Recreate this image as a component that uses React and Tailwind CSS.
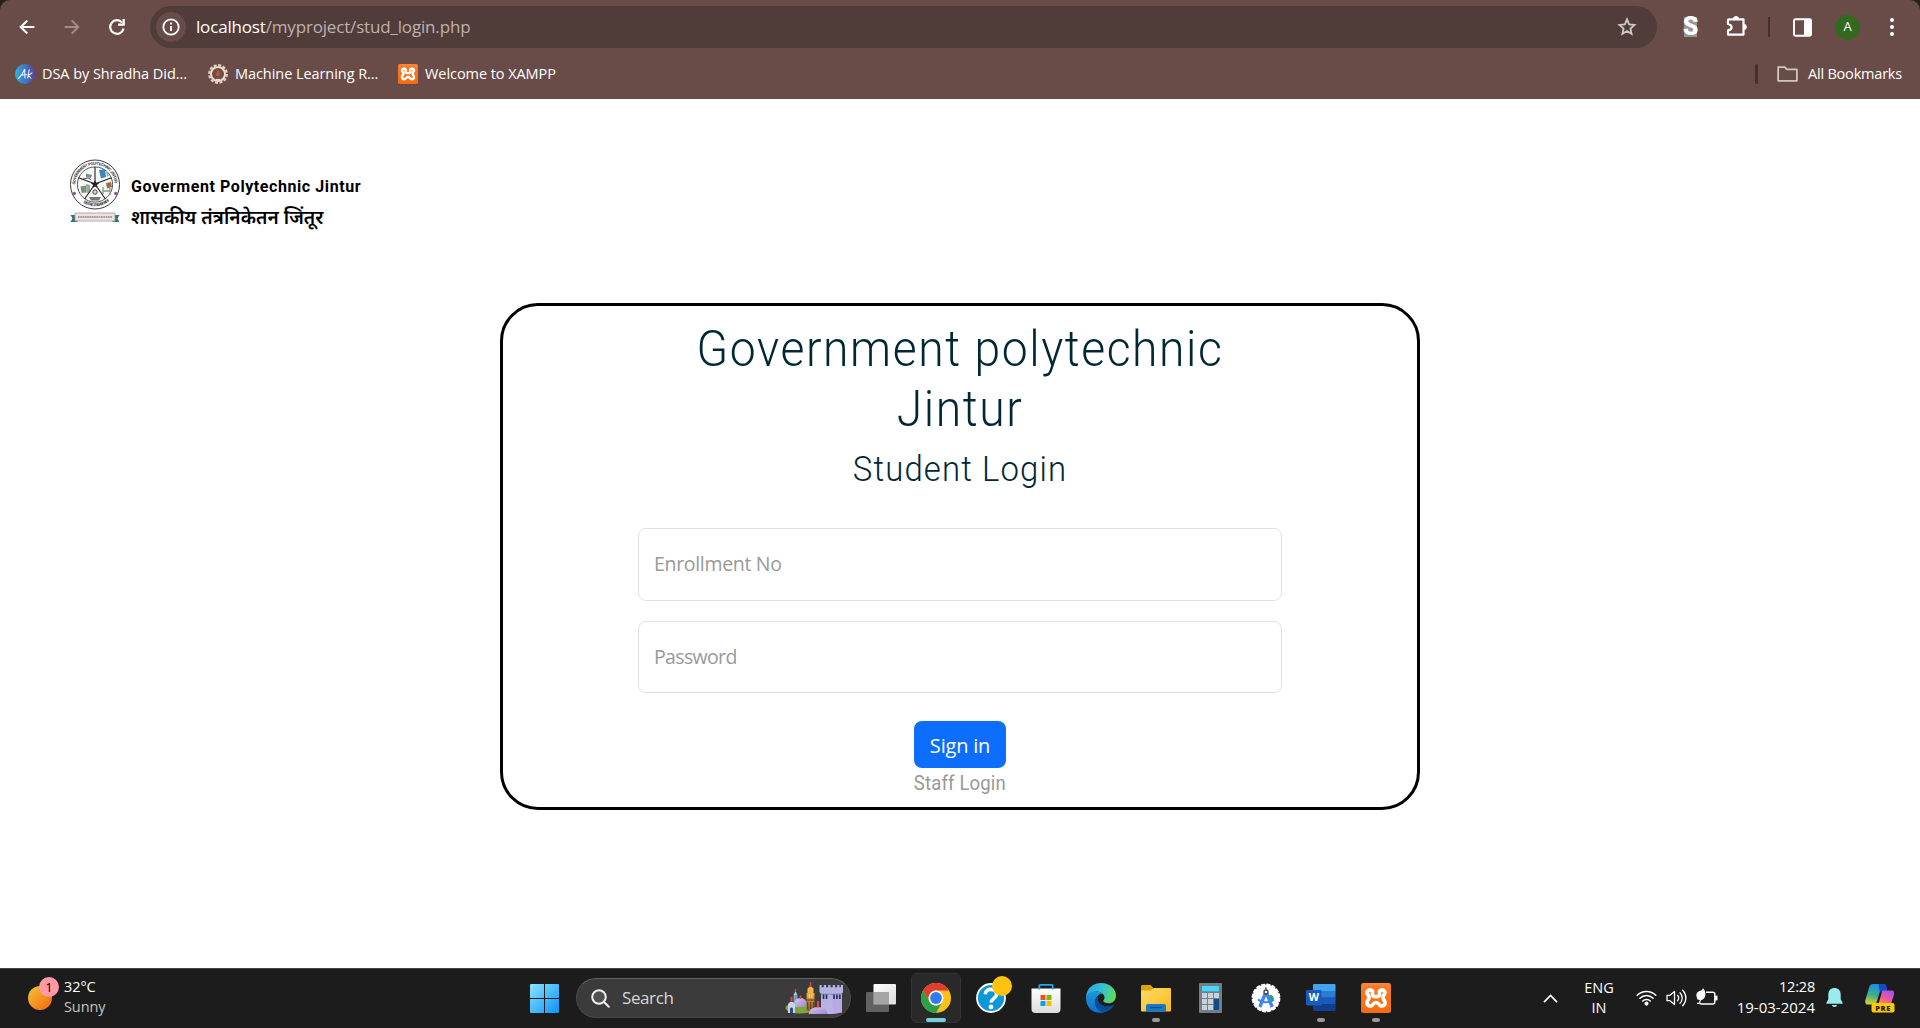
import React from "react";

/* ---------- Browser chrome icons ---------- */

const BackIcon = () => (
  <svg className="h-4 w-4" viewBox="0 0 16 16" fill="none" stroke="#fff" strokeWidth="2.1">
    <path d="M15.4 8H2.2M8.3 1.4 1.7 8l6.6 6.6" />
  </svg>
);

const ForwardIcon = () => (
  <svg className="h-4 w-4" viewBox="0 0 16 16" fill="none" stroke="#a08c89" strokeWidth="2">
    <path d="M.6 8h13.2M7.7 1.4 14.3 8l-6.6 6.6" />
  </svg>
);

const ReloadIcon = () => (
  <svg className="h-4 w-4" viewBox="0 0 16 16" fill="none" stroke="#fff" strokeWidth="2.2">
    <path d="M14.6 9.6A6.8 6.8 0 1 1 13.2 3.6" />
    <path d="M14.7 0v5.7H9" />
  </svg>
);

const InfoIcon = () => (
  <svg className="h-[18px] w-[18px]" viewBox="0 0 18 18" fill="none" stroke="#fff">
    <circle cx="9" cy="9" r="7.7" strokeWidth="1.8" />
    <path d="M9 7.9v5.2M9 4.6v1.9" strokeWidth="1.9" />
  </svg>
);

const StarIcon = () => (
  <svg className="h-5 w-5" viewBox="0 0 20 20" fill="none" stroke="#cfc8c7" strokeWidth="1.8">
    <path d="m10 2.4 2.1 5 5.4.5-4.1 3.6 1.2 5.3L10 14l-4.6 2.8 1.2-5.3-4.1-3.6 5.4-.5z" />
  </svg>
);

const PuzzleIcon = () => (
  <svg className="h-[22px] w-[22px]" viewBox="0 0 22 22">
    <path
      d="M2.8 4.3h14.7v15.3H2v-4.2c2.6-.5 3.6-1.6 3.6-3.2S4.600 9.600 2 9V5.100a.8.8 0 0 1 .8-.8z"
      fill="none"
      stroke="#fff"
      strokeWidth="2.2"
      strokeLinejoin="round"
    />
    <path d="M7.200 4.200a2.800 2.800 0 0 1 5.600 0zM17.600 9.200a2.800 2.800 0 0 1 0 5.600z" fill="#fff" stroke="#fff" strokeWidth=".8" />
  </svg>
);

const SidePanelIcon = () => (
  <svg className="h-[19px] w-[19px]" viewBox="0 0 19 19">
    <rect x="1" y="1.2" width="17" height="16.6" rx="1.2" fill="none" stroke="#fff" strokeWidth="1.9" />
    <path d="M11 1h7v17h-7z" fill="#fff" />
  </svg>
);

const FolderOutline = () => (
  <svg className="h-4 w-[21px]" viewBox="0 0 21 16" fill="none" stroke="#cfc6c4" strokeWidth="1.8">
    <path d="M1.2 1.2h6.600l2 2.200h9.800a.3.3 0 0 1 .3.3v10.800a.4.4 0 0 1-.4.4h-18a.4.4 0 0 1-.4-.4z" />
  </svg>
);

const AkIcon = () => (
  <svg className="h-5 w-5" viewBox="0 0 20 20">
    <defs>
      <linearGradient id="ak" x1="0" x2="1">
        <stop offset="0" stopColor="#2fb4d4" />
        <stop offset=".5" stopColor="#3e78c4" />
        <stop offset="1" stopColor="#5f3f9f" />
      </linearGradient>
    </defs>
    <circle cx="10" cy="10" r="10" fill="url(#ak)" />
    <g fill="none" stroke="#e8f2fa" strokeWidth="1.1" strokeLinecap="round">
      <path d="M3.5 14.5C6 12 8.5 8.5 9.7 5c.2 3.5.2 6.5.3 9M5.7 11.4c1.600-.6 4-.6 6-.6" />
      <path d="M14.2 5.8 12.6 14M17 9l-3.700 2.400 2.600 2.800" />
    </g>
  </svg>
);

const GearSeal = () => (
  <svg className="h-5 w-5" viewBox="0 0 20 20">
    <circle cx="10" cy="10" r="8.8" fill="none" stroke="#e6cfc0" strokeWidth="2.2" strokeDasharray="3 1.6" />
    <circle cx="10" cy="10" r="7" fill="#6a4e48" stroke="#efd9c9" strokeWidth="2" />
    <path d="M10 5.500c1.300 2.200 1.800 3.500 1.800 5.200a1.800 1.800 0 0 1-3.600 0c0-1.700.5-3 1.800-5.200z" fill="#c9503a" />
    <path d="M8 15.500h4" stroke="#efd9c9" strokeWidth="1.2" />
  </svg>
);

/* The looped XAMPP mark, shared by the bookmark and the taskbar button. */
const XamppMark = ({ className }) => (
  <svg className={className} viewBox="0 0 30 30">
    <defs>
      <linearGradient id="xa" x1="0" x2="0" y1="0" y2="1">
        <stop offset="0" stopColor="#f58a45" />
        <stop offset=".15" stopColor="#fb7a24" />
        <stop offset="1" stopColor="#f26c12" />
      </linearGradient>
    </defs>
    <rect width="30" height="30" rx="2.5" fill="url(#xa)" />
    <path
      d="M11.500 8C8.500 5.200 5 8.200 6.600 11.200c.7 1.300 1.700 1.900 1.400 3.800s-1.800 2.400-2 4.400c-.3 3.600 3.700 4.600 5.500 2.400 1.200-1.500 2-2.300 3.500-2.300s2.300.8 3.500 2.300c1.800 2.200 5.800 1.200 5.500-2.400-.2-2-1.700-2.500-2-4.400s.7-2.500 1.400-3.800C25 8.200 21.500 5.200 18.500 8v3.200c0 2-1 2.500-3.500 2.500s-3.500-.5-3.500-2.500z"
      fill="none"
      stroke="#fff"
      strokeWidth="3.7"
      strokeLinejoin="round"
    />
  </svg>
);

/* ---------- College seal ---------- */

const Seal = () => (
  <svg className="h-[66px] w-[52px] shrink-0" viewBox="0 0 52 66">
    <defs>
      <path id="sealTop" d="M6.300 26.500a19.700 19.700 0 0 1 39.400 0" />
      <path id="sealLow" d="M4.500 30a21.800 21.800 0 0 0 43 0" />
    </defs>
    <circle cx="26" cy="26.500" r="24.500" fill="#fff" stroke="#3a3a3a" strokeWidth="1" />
    <circle cx="26" cy="26.500" r="17.600" fill="#f7f7f4" stroke="#444" strokeWidth=".9" />
    <text fontFamily="Roboto" fontWeight="700" fontSize="4" fill="#333">
      <textPath href="#sealTop" textLength="60">GOVERNMENT POLYTECHNIC JINTUR</textPath>
    </text>
    <text fontFamily="Roboto" fontWeight="700" fontSize="4" fill="#333">
      <textPath href="#sealLow" startOffset="18" textLength="28">DISTRICT PARBHANI</textPath>
    </text>
    <circle cx="5.300" cy="35.500" r="1.700" fill="#8b5a9a" />
    <circle cx="46.700" cy="35.500" r="1.700" fill="#8b5a9a" />
    <path d="M17 15.500l6 1.500-1 3-5-1z" fill="#7b8b94" />
    <path d="M14 21l5-1 3 1.500" stroke="#555" fill="none" />
    <path d="M30 12l6-1 1 8-5 1.500z" fill="#3f86b8" />
    <path d="M37 12l3 5-2 2z" fill="#7fb0d0" />
    <path d="M11.500 28.500l6-1v7l-5 .5z" fill="#7b9078" />
    <path d="M17 26l4 1v7l-3 1z" fill="#9aa99c" />
    <path d="M37 25l5-1 1 5-5 1.500z" fill="#9b6b4a" />
    <path d="M34 36v-7m7 8v-7m-7 3h7" stroke="#7aa08c" fill="none" strokeWidth="1.3" />
    <path d="M20 39h12l-2 3.500H22z" fill="#777" />
    <path
      d="M26 25V9M25 25.500 9.500 19.800M27 25.500l15.500-5.700M25 27.500 15.600 41M27 27.500 36.400 41"
      stroke="#222"
      strokeWidth="1.1"
    />
    <path d="m26 22 1.200 2.700 3 .3-2.300 2 .8 3L26 28.500 23.300 30l.8-3-2.300-2 3-.3z" fill="#222" />
    <circle cx="26" cy="34" r="2.200" fill="#d8d8d8" stroke="#444" strokeWidth="1" />
    <path d="M1.500 57h7v7h-7l2-3.500zM50.500 57h-7v7h7l-2-3.500z" fill="#2f7180" />
    <path d="M6 55h40v8H6z" fill="#e9e4df" stroke="#a39b95" strokeWidth=".8" />
    <path d="M9 59h34" stroke="#8d7f83" strokeWidth="1.3" strokeDasharray="1.6 .7" />
  </svg>
);

/* ---------- Taskbar icons ---------- */

const WindowsLogo = () => (
  <svg className="h-[29px] w-[29px]" viewBox="0 0 29 29">
    <defs>
      <linearGradient id="win" x1="0" y1="0" x2="1" y2="1">
        <stop offset="0" stopColor="#8be3ff" />
        <stop offset="1" stopColor="#0a93f5" />
      </linearGradient>
    </defs>
    <path fill="url(#win)" d="M1 0h13v14H0V1a1 1 0 0 1 1-1zm14 0h13a1 1 0 0 1 1 1v13H15zM0 15h14v14H1a1 1 0 0 1-1-1zm15 0h14v13a1 1 0 0 1-1 1H15z" />
  </svg>
);

const Castle = () => (
  <svg className="h-8 w-[58px]" viewBox="0 0 58 32">
    <defs>
      <linearGradient id="ca" x1="0" x2="1" y2="1">
        <stop offset="0" stopColor="#aab4dc" />
        <stop offset="1" stopColor="#c3b2ea" />
      </linearGradient>
      <linearGradient id="cb" x1="0" x2="0" y1="0" y2="1">
        <stop offset="0" stopColor="#e9a93c" />
        <stop offset="1" stopColor="#8b5c36" />
      </linearGradient>
      <linearGradient id="cc" x1="0" x2="1" y1="0" y2="1">
        <stop offset="0" stopColor="#d9cbea" />
        <stop offset="1" stopColor="#9b86cf" />
      </linearGradient>
    </defs>
    <ellipse cx="15" cy="26" rx="14.500" ry="5.500" fill="#7fa43a" />
    <path d="M21.500 11h8v18h-8z" fill="url(#cb)" />
    <path d="M22.500 11V6.500L25.500 4l3 2.500V11z" fill="#f2b740" />
    <path d="M20.500 18h10M22.700 20v7m2.900-7v7m2.900-7v7" stroke="#5d3c20" strokeWidth="1.100" />
    <path d="M24.300 12v4m2.600-4v4" stroke="#ffe98a" strokeWidth="1" />
    <path d="M25.500 0v5" stroke="#e73f62" strokeWidth="1.500" />
    <path d="M8.500 13h4v12h-4z" fill="#7f9ab8" />
    <path d="M8.500 13 10.500 9l2 4z" fill="#a8c5e4" />
    <path d="M10.500 7v3" stroke="#e73f62" strokeWidth="1.300" />
    <path d="M9.500 21a6 5 0 0 1 12 0l-1 4h-10z" fill="url(#cc)" />
    <path d="M15.500 13.500v3.500" stroke="#e73f62" strokeWidth="1.800" />
    <path d="M3 23.500c0-5 7-5 7 0V31H3z" fill="#c9d6e8" />
    <path d="M5 31v-4c0-2 3-2 3 0v4z" fill="#2c4d76" />
    <path d="M6.500 15v4.500" stroke="#e73f62" strokeWidth="2" />
    <path d="M34.500 3h2.200v2.200h2.100V3H41v2.200h2.200V3h2.300v2.200h2.200V3H50v2.200h2.200V3h2.200v2.200h1.500V3H58v7l-1 2v18.500L48 32H36V12l-1.500-2z" fill="url(#ca)" />
    <path d="M36 11.500h11.500L57 11v1.200l-9.500.8H36z" fill="#7680b4" opacity=".6" />
    <path d="M47.500 13v19l9.500-1.500V12.200z" fill="#b3a0dc" opacity=".5" />
    <path d="M38.500 12.500V17m3-4.500V17m7.500-4.500V17m2.900-4.500V17m2.900-4.500V17" stroke="#27315c" strokeWidth="1.700" />
    <path d="M23.500 32a9.500 7 0 0 1 19 0z" fill="url(#cc)" />
    <path d="M33 19v6.500" stroke="#e73f62" strokeWidth="2.200" />
  </svg>
);

const TaskView = () => (
  <svg className="h-[30px] w-[30px]" viewBox="0 0 30 30">
    <defs>
      <linearGradient id="tv" x1="0" x2="1" y2="1">
        <stop offset="0" stopColor="#fff" />
        <stop offset="1" stopColor="#dcdcdc" />
      </linearGradient>
    </defs>
    <rect x="7.500" y="1" width="22.500" height="20.500" rx="1" fill="url(#tv)" />
    <rect x="0" y="9" width="23" height="20" rx="1" fill="#6d6d6d" opacity=".85" />
    <path d="M7.500 9H23v12.500H7.500z" fill="#a5a5a5" />
  </svg>
);

const Chrome = () => (
  <svg className="h-[30px] w-[30px]" viewBox="0 0 30 30">
    <circle cx="15" cy="15" r="15" fill="#fbc116" />
    <path d="M2 7.500A15 15 0 0 1 28 7.500H15a7.500 7.500 0 0 0-6.500 11.250z" fill="#e33b2e" />
    <path d="M2 7.500 8.500 18.750A7.500 7.500 0 0 0 21.500 18.750L15 30A15 15 0 0 1 2 7.500z" fill="#2c9f48" />
    <circle cx="15" cy="15" r="7.400" fill="#fff" />
    <circle cx="15" cy="15" r="5.900" fill="#2f7cf0" />
  </svg>
);

const HelpIcon = () => (
  <svg className="h-[30px] w-[30px]" viewBox="0 0 30 30">
    <circle cx="15" cy="15" r="14" fill="#0a98d8" stroke="#fff" strokeWidth="1.800" />
    <path d="M9.200 11.200c.4-3.400 3-5 6-4.800 3.600.2 5.600 2.400 5.400 5.200-.3 3.800-5.400 3.800-5.400 8" fill="none" stroke="#fff" strokeWidth="3.600" />
    <circle cx="15" cy="24" r="2.400" fill="#fff" />
  </svg>
);

const StoreIcon = () => (
  <svg className="h-[30px] w-[30px]" viewBox="0 0 30 30">
    <defs>
      <linearGradient id="st" x1="0" x2="0" y1="0" y2="1">
        <stop offset="0" stopColor="#fff" />
        <stop offset="1" stopColor="#dcdcdc" />
      </linearGradient>
    </defs>
    <path d="M.5 5.500h29V26a4 4 0 0 1-4 4h-21a4 4 0 0 1-4-4z" fill="url(#st)" />
    <path d="M8.300 6.500V2.700a.9.9 0 0 1 .9-.9h11.600a.9.9 0 0 1 .9.9v3.800" fill="none" stroke="#22a7e8" strokeWidth="1.800" />
    <path d="M9.500 12h5v5h-5z" fill="#f25022" />
    <path d="M15.500 12h5v5h-5z" fill="#7fba00" />
    <path d="M9.500 18h5v5h-5z" fill="#00a4ef" />
    <path d="M15.500 18h5v5h-5z" fill="#ffb900" />
  </svg>
);

const EdgeIcon = () => (
  <svg className="h-[30px] w-[30px]" viewBox="0 0 30 30">
    <defs>
      <linearGradient id="e1" x1="0" x2="1" y1=".3" y2=".5">
        <stop offset="0" stopColor="#2aa5e6" />
        <stop offset=".55" stopColor="#33c3d0" />
        <stop offset="1" stopColor="#63dc4e" />
      </linearGradient>
      <linearGradient id="e2" x1="0" x2="0" y1="0" y2="1">
        <stop offset="0" stopColor="#1d98dc" />
        <stop offset="1" stopColor="#0d6fcb" />
      </linearGradient>
    </defs>
    <path d="M0 15C0 5.500 7 0 15 0c8.500 0 15 6 15 12.500 0 5-3.500 7.800-7.500 7.800-3 0-5.300-1.200-5.300-2.300 0-.8 1.300-1.200 1.300-3.500C18.500 11 14.500 8.500 10.500 8.500 5 8.500 1 11.500 0 15z" fill="url(#e1)" />
    <path d="M0 15c.7-4 4.700-6.800 10-6.800 3.200 0 5.200 1.200 6.200 2.300-3.400.3-6.700 3.800-6.700 8.500 0 5 4 9.500 9 10.200C8.500 32 0 25.500 0 15z" fill="url(#e2)" />
    <path d="M12.500 12.500c-2.200 1.400-3.800 4-3.800 7 0 5.500 5 10.100 10.800 9.600 3.500-.9 6.500-3.300 8.200-6.300.4-.8-.3-1.200-1-.8-5.500 2.800-12.700.8-14.500-4.500-.6-2-.5-3.600.3-5z" fill="#0b4c94" />
  </svg>
);

const ExplorerIcon = () => (
  <svg className="h-[30px] w-[30px]" viewBox="0 0 30 30">
    <defs>
      <linearGradient id="fo" x1="0" x2="1" y2="1">
        <stop offset="0" stopColor="#ffdc69" />
        <stop offset="1" stopColor="#fbb81a" />
      </linearGradient>
    </defs>
    <path d="M0 3.500C0 2.500.5 2 1.500 2h8.200l3 3.500V10H0z" fill="#e0a00e" />
    <path d="M0 7.500h9.500L13 5h16a1 1 0 0 1 1 1v21.500a1 1 0 0 1-1 1H1a1 1 0 0 1-1-1z" fill="url(#fo)" />
    <path d="M5 28.500V23a2 2 0 0 1 2-2h16a2 2 0 0 1 2 2v5.500z" fill="#1378cf" />
    <path d="M9 24.500h12" stroke="#0b4c8c" strokeWidth="1.300" />
  </svg>
);

const CalculatorIcon = () => (
  <svg className="h-[30px] w-[30px]" viewBox="0 0 30 30">
    <rect x="3" y="0" width="23" height="30" rx="1" fill="#747d86" />
    <path d="M6 3h17v5.300H6z" fill="#45d8fb" />
    <path d="M6 10h5v5H6zm6 0h5v5h-5zm6 0h5v5h-5zM6 16h5v5H6zm6 0h5v5h-5zm-6 6h5v5H6zm6 0h5v5h-5z" fill="#c9d1d9" />
    <path d="M18 16h5v11h-5z" fill="#0f4a8a" />
  </svg>
);

const AndroidStudioIcon = () => (
  <svg className="h-[30px] w-[30px]" viewBox="0 0 30 30">
    <circle cx="15" cy="15" r="13.400" fill="#fff" />
    <circle cx="15" cy="15" r="13.600" fill="none" stroke="#fff" strokeWidth="1.600" strokeDasharray="4 1.340" />
    <path d="M17 12h3a3.800 3.800 0 0 1 1.500 6.500L18 18z" fill="#2fa35c" />
    <path d="M14.500 10 8.800 24M15.500 10l5.700 14" stroke="#4285f4" strokeWidth="3.400" />
    <path d="M7 16.500c4 3.500 12 3.500 16 0" fill="none" stroke="#4285f4" strokeWidth="2" />
    <path d="M15 4.500v2" stroke="#444" strokeWidth="1.400" />
    <circle cx="15" cy="9" r="2" fill="#fff" stroke="#3c4043" strokeWidth="1.300" />
  </svg>
);

const WordIcon = () => (
  <svg className="h-[30px] w-[30px]" viewBox="0 0 30 30">
    <path d="M7 2a1 1 0 0 1 1-1h20.500a1 1 0 0 1 1 1v6H7z" fill="#41a5ee" />
    <path d="M7 8h22.500v6.800H7z" fill="#2b7cd3" />
    <path d="M7 14.800h22.500v6.700H7z" fill="#185abd" />
    <path d="M7 21.500h22.500V27a1 1 0 0 1-1 1H8a1 1 0 0 1-1-1z" fill="#103f91" />
    <rect x="0" y="7" width="15.500" height="15.500" rx="1.400" fill="#185abd" />
    <text x="7.800" y="18.400" textAnchor="middle" fontFamily="Open Sans" fontWeight="700" fontSize="10.500" fill="#fff">W</text>
  </svg>
);

const WifiIcon = () => (
  <svg className="h-5 w-[21px]" viewBox="0 0 21 20" fill="none" stroke="#fff" strokeWidth="1.500" strokeLinecap="round">
    <path d="M1.200 7.300a13.200 13.200 0 0 1 18.600 0M3.900 10.300a9.300 9.300 0 0 1 13.200 0M6.700 13a5.400 5.400 0 0 1 7.600 0" />
    <circle cx="10.500" cy="15.600" r="1.300" fill="#fff" />
  </svg>
);

const SpeakerIcon = () => (
  <svg className="h-5 w-[21px]" viewBox="0 0 21 20" fill="none" stroke="#fff" strokeWidth="1.300" strokeLinecap="round" strokeLinejoin="round">
    <path d="M1 7.300h3L8.500 3.500v13L4 12.700H1z" />
    <path d="M11.500 7.300a4 4 0 0 1 0 5.400M14 4.700a7.500 7.500 0 0 1 0 10.600M16.700 2.300a11 11 0 0 1 0 15.400" />
  </svg>
);

const BatteryIcon = () => (
  <svg className="h-5 w-[22px]" viewBox="0 0 22 20" fill="none" stroke="#fff" strokeWidth="1.400">
    <path d="M10 4.200h6.800a2 2 0 0 1 2 2v7.800a2 2 0 0 1-2 2H5.500a2 2 0 0 1-1.800-1.300" />
    <path d="M19.800 8.300h1v3.400h-1z" fill="#fff" />
    <path d="M7 .2c2.700 2.500 3 7 1.500 9.500C7.200 12 4 12.500 1.500 11.500-.2 8-.2 4.800 3 3.300 5 2.600 6.500 1.800 7 .2z" fill="#fff" stroke="none" />
    <path d="M1 15.300h2.700M3.300 14.500C5 12 6.300 9 6.300 6.500" strokeWidth="1.200" />
  </svg>
);

const BellIcon = () => (
  <svg className="h-5 w-[17px]" viewBox="0 0 17 20">
    <path d="M8.500 0C4.700 0 2.300 2.700 2.300 6.200v5L.3 15c-.2.500 0 .8.500.8h15.400c.5 0 .7-.3.5-.8l-2-3.800v-5C14.700 2.700 12.300 0 8.500 0zM5.800 17a2.800 2.800 0 0 0 5.400 0z" fill="#99ebec" />
  </svg>
);

const CopilotIcon = () => (
  <svg className="h-[29px] w-[30px]" viewBox="0 0 30 29">
    <defs>
      <linearGradient id="c1" x1=".3" x2=".1" y1="0" y2="1">
        <stop offset="0" stopColor="#1a8fe8" />
        <stop offset=".5" stopColor="#3bae8c" />
        <stop offset="1" stopColor="#e6d422" />
      </linearGradient>
      <linearGradient id="c2" x1=".8" x2=".2" y1="0" y2="1">
        <stop offset="0" stopColor="#a24df0" />
        <stop offset=".6" stopColor="#ee5a9c" />
        <stop offset="1" stopColor="#fb8a4a" />
      </linearGradient>
    </defs>
    <path d="M8 0h10.500c1.500 0 2.300 1 2.700 2.500L22 6h-4.500c-1.500 0-2.300.7-2.800 2.200L11.500 18.500C11 20 10 20.500 8.500 20.500H3C.5 20.500-.3 18.500.4 16L4.300 3C5 1 6 0 8 0z" fill="url(#c1)" />
    <path d="M13.500 0h5c1.500 0 2.300 1 2.700 2.500L22.200 7H18c-1.500 0-2.500.7-3 2.200z" fill="#1649c9" />
    <path d="M18 6.500h8.500c2.500 0 3 2 2.400 4.500L26 20H13.500l3-10.500c.4-1.800.8-3 1.500-3z" fill="url(#c2)" />
    <rect x="6.500" y="19" width="23" height="9.500" rx="2" fill="#ffc800" />
    <text x="18" y="26.500" textAnchor="middle" fontFamily="Open Sans" fontWeight="800" fontSize="7.500" letterSpacing=".6" fill="#1c1c1c">PRE</text>
  </svg>
);

/* ---------- Layout pieces ---------- */

const Bookmark = ({ icon, label, width }) => (
  <div className={`flex items-center gap-[7px] ${width}`}>
    {icon}
    <span className="whitespace-nowrap">{label}</span>
  </div>
);

const BrowserBar = () => (
  <div className="h-[99px] bg-[#2b1d1b]">
    <div className="flex h-full flex-col rounded-t-[10px] bg-[#694c47] text-white">
      <div className="flex h-[54px] items-center pl-[19px] pr-5">
        <div className="flex w-[131px] items-center gap-[29px]">
          <BackIcon />
          <ForwardIcon />
          <ReloadIcon />
        </div>
        <div className="flex h-[42px] w-[1507px] items-center rounded-full bg-[#503d3a] pl-[6px] pr-5">
          <div className="flex h-[30px] w-[30px] items-center justify-center rounded-full bg-[#694c47]">
            <InfoIcon />
          </div>
          <div className="ml-[10px] grow text-[17px] tracking-[-0.17px] text-[#bdb1af]">
            <span className="text-white">localhost</span>/myproject/stud_login.php
          </div>
          <StarIcon />
        </div>
        <div className="ml-[27px] flex h-5 w-[13px] items-center justify-center bg-[#969696]">
          <span className="font-['Roboto'] text-[25px] font-black leading-5">S</span>
        </div>
        <div className="ml-[29px] -mt-[2px]">
          <PuzzleIcon />
        </div>
        <div className="ml-5 h-5 w-[2px] bg-[#46302d]" />
        <div className="ml-[23px]">
          <SidePanelIcon />
        </div>
        <div className="ml-[23px] flex h-[25px] w-[25px] items-center justify-center rounded-full bg-[#32691f] text-[13px]">
          A
        </div>
        <div className="ml-auto flex w-4 flex-col items-center gap-[3px]">
          <div className="h-1 w-1 rounded-full bg-white" />
          <div className="h-1 w-1 rounded-full bg-white" />
          <div className="h-1 w-1 rounded-full bg-white" />
        </div>
      </div>
      <div className="flex h-10 items-center pl-[15px] pr-[18px] text-[14.5px] tracking-[-0.06px]">
        <Bookmark icon={<AkIcon />} label="DSA by Shradha Did..." width="w-[193px]" />
        <Bookmark icon={<GearSeal />} label="Machine Learning R..." width="w-[190px]" />
        <Bookmark icon={<XamppMark className="h-5 w-5" />} label="Welcome to XAMPP" width="w-[190px]" />
        <div className="ml-auto flex items-center">
          <div className="h-5 w-[3px] rounded bg-[#46302d]" />
          <div className="ml-[19px]">
            <FolderOutline />
          </div>
          <span className="ml-[10px] tracking-[-0.2px]">All Bookmarks</span>
        </div>
      </div>
    </div>
  </div>
);

const Field = ({ label, spacing }) => (
  <div className={`flex h-[72.5px] w-[644px] items-center rounded-[8px] border border-[#dee2e6] pb-[1px] pl-[15px] text-[19.5px] text-[#999] ${spacing}`}>
    {label}
  </div>
);

const LoginCard = () => (
  <form className="mx-auto flex h-[507px] w-[920px] flex-col items-center rounded-[38px] border-[3px] border-black pt-[13px]">
    <h1 className="w-[644px] scale-x-[.925] text-center font-['Roboto'] text-[50px] font-light leading-[60px] tracking-[1.7px] text-[#012735]">
      Government polytechnic
      <br />
      Jintur
    </h1>
    <h2 className="mt-[10px] scale-x-[.94] font-['Roboto'] text-[35px] font-light leading-[42px] tracking-[1.2px] text-[#012735]">
      Student Login
    </h2>
    <div className="mt-[37px] flex flex-col gap-5">
      <Field label="Enrollment No" spacing="tracking-[-0.32px]" />
      <Field label="Password" spacing="tracking-[-0.65px]" />
    </div>
    <button
      type="button"
      className="mt-7 h-[47px] w-[92px] rounded-[8px] bg-[#0d6efd] pt-[2px] text-[20px] tracking-[-0.2px] text-white"
    >
      Sign in
    </button>
    <a className="scale-x-[.925] font-['Roboto'] text-[20px] leading-[31px] tracking-[0.2px] text-[#999]">Staff Login</a>
  </form>
);

const Tile = ({ children, running, active }) => (
  <div className={`relative flex h-[50px] w-[50px] items-center justify-center ${active ? "rounded-md border border-[#333] bg-[#292929]" : ""}`}>
    {children}
    {running && <div className="absolute bottom-[1px] h-1 w-2 rounded-full bg-[#9a9a9a]" />}
    {active && <div className="absolute bottom-0 h-1 w-5 rounded-full bg-[#72d3dc]" />}
  </div>
);

const Taskbar = () => (
  <div className="flex h-[60px] items-center border-t border-[#474747] bg-[#1c1c1c] pb-[1px] text-[14.5px] leading-5 text-white">
    <div className="flex w-[519px] items-center gap-[12px] pl-7">
      <div className="relative h-6 w-6 rounded-full bg-linear-to-br from-[#f2c236] to-[#f2640c]">
        <div className="absolute -top-[9px] left-[11px] flex h-5 w-5 items-center justify-center rounded-full bg-[#ff99a4] text-[13px] text-black">
          1
        </div>
      </div>
      <div className="-mt-[2px] tracking-[-0.1px]">
        <div>32°C</div>
        <div className="text-[#c4c4c4]">Sunny</div>
      </div>
    </div>
    <div className="flex items-center gap-[5px]">
      <Tile>
        <WindowsLogo />
      </Tile>
      <div className="ml-[2px] flex h-10 w-[275px] items-center rounded-full border border-[#4a4a4a] border-t-[#636363] bg-[#3b3b3b] pl-[14px] pr-[7px]">
        <svg className="h-[19px] w-[19px]" viewBox="0 0 19 19" fill="none" stroke="#f0f0f0" strokeWidth="2" strokeLinecap="round">
          <circle cx="8" cy="8" r="6.800" fill="#515151" />
          <path d="m13 13 4.800 4.800" />
        </svg>
        <span className="ml-[12px] grow text-[17px] tracking-[-0.4px] text-[#d6d6d6]">Search</span>
        <Castle />
      </div>
      <Tile>
        <TaskView />
      </Tile>
      <Tile active>
        <Chrome />
      </Tile>
      <Tile>
        <HelpIcon />
        <div className="absolute right-[4px] top-[3px] h-5 w-5 rounded-full bg-[#ffc20e]" />
      </Tile>
      <Tile>
        <StoreIcon />
      </Tile>
      <Tile>
        <EdgeIcon />
      </Tile>
      <Tile running>
        <ExplorerIcon />
      </Tile>
      <Tile>
        <CalculatorIcon />
      </Tile>
      <Tile>
        <AndroidStudioIcon />
      </Tile>
      <Tile running>
        <WordIcon />
      </Tile>
      <Tile running>
        <XamppMark className="h-[30px] w-[30px]" />
      </Tile>
    </div>
    <div className="ml-auto flex items-center pr-[25px]">
      <svg className="h-[9px] w-[15px]" viewBox="0 0 15 9" fill="none" stroke="#fff" strokeWidth="1.700">
        <path d="M1 8.200 7.500 1.500 14 8.200" />
      </svg>
      <div className="ml-[26px] w-[30px] text-center">
        <div>ENG</div>
        <div>IN</div>
      </div>
      <div className="ml-[22px] flex items-center gap-[9px]">
        <WifiIcon />
        <SpeakerIcon />
        <BatteryIcon />
      </div>
      <div className="-mt-[2px] ml-[18px] w-[79px] text-right">
        <div className="tracking-[-0.2px]">12:28</div>
        <div className="text-[15px]">19-03-2024</div>
      </div>
      <div className="ml-[11px]">
        <BellIcon />
      </div>
      <div className="ml-[22px]">
        <CopilotIcon />
      </div>
    </div>
  </div>
);

export default function App() {
  return (
    <div className="flex h-[1028px] w-[1920px] flex-col overflow-hidden bg-white font-['Open_Sans','Noto_Sans',sans-serif]">
      <BrowserBar />
      <main className="flex grow flex-col">
        <header className="flex h-[204px] gap-[10px] pl-[69px] pt-[59px]">
          <Seal />
          <div className="pt-[15px] text-black">
            <div className="font-['Roboto'] text-[16px] font-bold leading-7 tracking-[0.58px]">Goverment Polytechnic Jintur</div>
            <div className="font-['Noto_Sans'] text-[19px] font-semibold leading-8 tracking-[0.06px]">शासकीय तंत्रनिकेतन जिंतूर</div>
          </div>
        </header>
        <LoginCard />
      </main>
      <Taskbar />
    </div>
  );
}
